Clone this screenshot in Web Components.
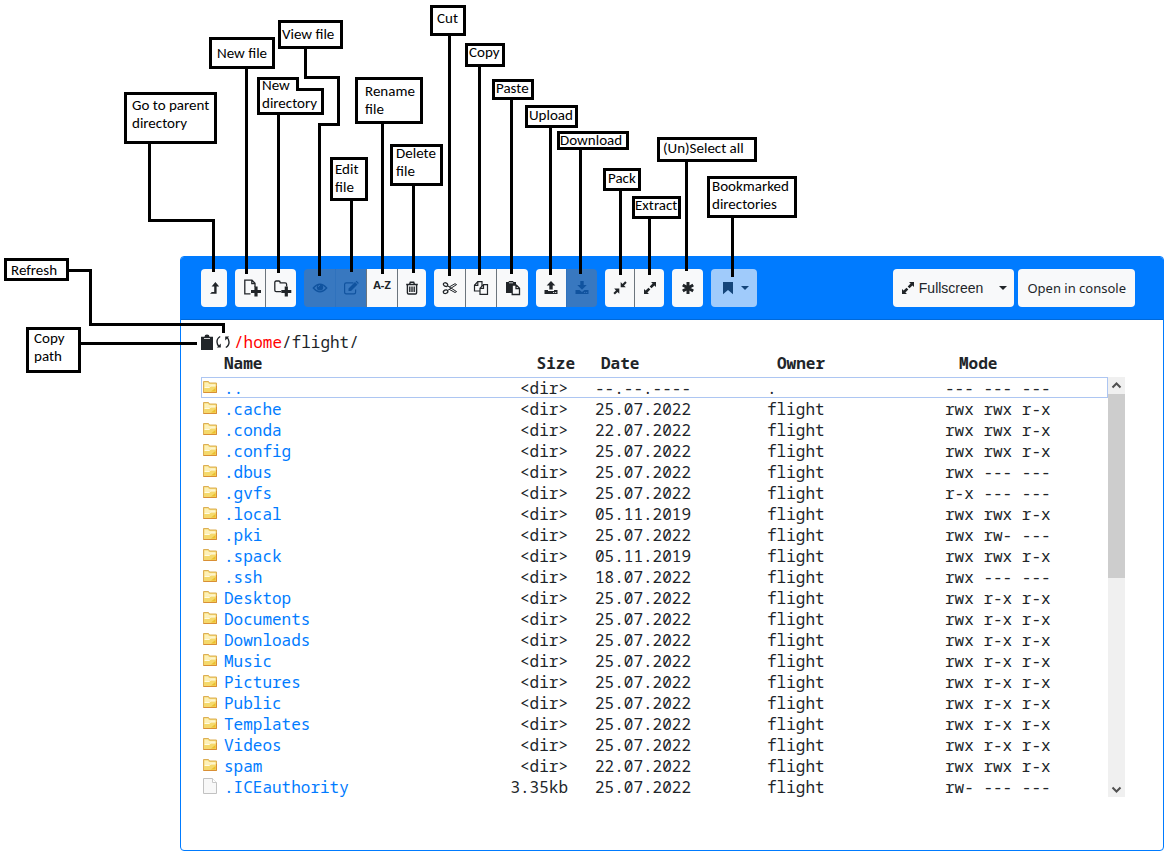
<!DOCTYPE html>
<html lang="en">
<head>
<meta charset="utf-8">
<title>File manager toolbar guide</title>
<style>
  html { background: #fff; }
  body { margin: 0; color: #212529; font-family: "Liberation Sans", Arial, sans-serif; }
</style>
</head>
<body>
<guide-page></guide-page>

<script>
const BOX = 'fill="none" stroke="currentColor"';
const ICONS = {
  up: `<path d="M4 13.8h6.6V6.6h2.6L9.4 2 5.6 6.6h2.6V12H5.8z" fill="currentColor"/>`,
  newfile: `<g transform="translate(3 0)"><path d="M7.5 15.8H1.8V2.2H9l3 3V9M8.8 2.2v3.4H12" ${BOX} stroke-width="1.3"/><path d="M11.4 8.5h3.2V12H18v3.1h-3.4v3.4h-3.2v-3.4H8V12h3.4z" fill="currentColor"/></g>`,
  newdir: `<g transform="translate(2 0)"><path d="M8 13.6H3.2q-1.4 0-1.4-1.4V4.4Q1.8 3 3.2 3h2.6q1.4 0 1.4 1.8h5q1.4 0 1.4 1.4V8.5" ${BOX} stroke-width="1.3"/><path d="M11.7 8.5h3.2V12h3.4v3.1h-3.4v3.4h-3.2v-3.4H8.3V12h3.4z" fill="currentColor"/></g>`,
  eye: `<path d="M1.3 8Q8 .4 14.7 8 8 15.6 1.3 8z" ${BOX} stroke-width="1.3"/><circle cx="8" cy="7.3" r="3.2" fill="currentColor"/><path d="M6.3 7q0-1.7 1.7-1.7" fill="none" stroke="#3878c0" stroke-width=".8"/>`,
  edit: `<path d="M12.6 9.5v2.7q0 1.6-1.6 1.6H3.2q-1.6 0-1.6-1.6V4.4q0-1.6 1.6-1.6h7.2" ${BOX} stroke-width="1.2"/><path d="M5.5 8.5 12 2l2.5 2.5L8 11H5.5zM12.6 1.5l.9-.8 2.3 2.3-.8.9z" fill="currentColor"/>`,
  trash: `<path d="M3.4 4.5h9.2v8.3q0 1.2-1.2 1.2H4.6q-1.2 0-1.2-1.2zM2.2 4.5h11.6M5.6 4.2l.7-2h3.4l.7 2M5.8 6.5v5.6M8 6.5v5.6M10.2 6.5v5.6" ${BOX} stroke-width="1.4"/>`,
  cut: `<g ${BOX} stroke-width="1"><ellipse cx="3.6" cy="4.6" rx="2.3" ry="1.7" transform="rotate(25 3.6 4.6)" stroke-width="1.3"/><ellipse cx="3.6" cy="11.7" rx="2.3" ry="1.7" transform="rotate(-25 3.6 11.7)" stroke-width="1.3"/><path d="M5.5 5.8 14.6 11.6 13 12.5 7 9.2M5.5 10.5 14.6 4.6 13 3.7 7 7.1"/></g>`,
  copy: `<g fill="#f8f9fa" stroke="currentColor" stroke-width="1.2"><path d="M1.5 11V5.3l3.3-3.6H9V11z"/><path d="M4.8 1.7v3.6H1.5" fill="none"/><path d="M7 14.3v-6l3.5-3.6h4v9.6z"/><path d="M10.5 4.7v3.6H7" fill="none"/></g>`,
  paste: `<path d="M1 2h2.7V1h4.6v1H11v3H7v8H1z" fill="currentColor"/><path d="M4 2.8h4" stroke="#f8f9fa" stroke-width=".8"/><path d="M7.2 5.2h4.3l3 3v6.3H7.2zM11 5.2v3.5h3.5" fill="#f8f9fa" stroke="currentColor" stroke-width="1.3"/>`,
  upload: `<path d="M8 1 12.3 5.5H9.7v4H6.3v-4H3.7zM1.5 10H5v1h6v-1h3.500v4h-13z" fill="currentColor"/><path d="M10.2 12.5h1M12.2 12.5h1" stroke="#f8f9fa"/>`,
  download: `<path d="M6.3 1h3.4v4h3L8 9.7 3.3 5h3zM1.500 10h4L8 12l2.500-2h4v4h-13z" fill="currentColor"/><path d="M10.2 12.5h1M12.2 12.5h1" stroke="#3878c0"/>`,
  compress: `<path d="M7.3 8.6v5.2l-1.8-1.7-2.6 2.5-1.5-1.5L4 10.500 2.200 8.600zM8.700 7.300V2.100l1.800 1.800 2.700-2.600 1.500 1.500L12 5.500l1.800 1.800z" fill="currentColor"/>`,
  expand: `<path d="M9 2h5v5l-1.6-1.6-2.9 2.9L7.7 6.5l2.9-2.9zM7 14H2V9l1.6 1.6 2.9-2.9 1.8 1.8-2.9 2.9z" fill="currentColor"/>`,
  asterisk: `<path d="M8 2v12M2.8 5l10.4 6M13.2 5 2.8 11" stroke="currentColor" stroke-width="3"/>`,
  bookmark: `<path d="M3 2h10v12.2L8 10l-5 4.2z" fill="currentColor"/>`,
  caret: `<path d="M0 0h8L4 4z" fill="currentColor"/>`,
  clipboard: `<path d="M2 2.8h3.5Q5.5.5 8 .5t2.5 2.3H14V16H2z" fill="currentColor"/><path d="M5 4.5h6" stroke="#fff" stroke-width=".8"/>`,
  refresh: `<g ${BOX} stroke-width="1.4"><path d="M5.2 2.5Q1.800 4.500 2 8q.1 3 2.200 4.800M10.800 13.500Q14.200 11.500 14 8q-.1-3-2.200-4.800"/></g><path d="M1.800 13.600h4V9.600zM14.200 2.400h-4v4z" fill="currentColor"/>`,
  folder: `<path d="M1.5 13.5v-11h5l1 1.5h7v9.5z" fill="#f5d96c" stroke="#dcae55"/><path d="M2.5 8V3.5h3.6l.8 1.5h6.600v2H8L7 8z" fill="#fdf0b8"/><path d="M2.5 8.5h5l1-1.5h5" fill="none" stroke="#fffbe4"/><path d="M9 12.5h4.500V9z" fill="#ecc02e"/><path d="M1.5 13.5h13V7" fill="none" stroke="#d98f35"/>`,
  file: `<path d="M1.5.5h9l4 4v11h-13z" fill="#f8f8f8" stroke="#c2c2c2"/><path d="M10.5.5v4h4" fill="#fff" stroke="#c8c8c8"/>`
};

function define(name, css, html) {
  customElements.define(name, class extends HTMLElement {
    connectedCallback() {
      if (this.shadowRoot) return;
      const body = typeof html === 'function' ? html(this) : html;
      this.attachShadow({ mode: 'open' }).innerHTML = `<style>${css}</style>${body}`;
    }
  });
}

define('ui-icon', `
  :host { display: inline-flex; flex: none; width: 16px; height: 16px; }
  :host([size="20"]) { width: 20px; height: 20px; }
  :host([name="caret"]) { width: 8px; height: 4px; }
  svg { display: block; width: 100%; height: 100%; overflow: visible; }`,
  el => {
    const name = el.getAttribute('name');
    const s = el.getAttribute('size') || 16;
    return `<svg viewBox="${name === 'caret' ? '0 0 8 4' : `0 0 ${s} ${s}`}" aria-hidden="true">${ICONS[name]}</svg>`;
  });

define('tool-button', `
  :host { display: block; border-left: 1px solid #6c757d; }
  :host(:first-child) { border-left: 0; }
  :host([off]) { border-color: #2f72bd; }
  button { box-sizing: border-box; display: flex; align-items: center; justify-content: center; gap: 3px;
    width: 100%; min-width: 30px; height: 38px; padding: 0; border: 0; background: #f8f9fa; color: #212529;
    font: 14px "Liberation Sans", Arial, sans-serif; white-space: nowrap; }
  :host([narrow]) button { min-width: 26px; }
  :host([slim]) button { min-width: 28px; }
  :host([trim]) button { min-width: 29px; }
  :host([wide]) button { min-width: 31px; }
  button:disabled { background: #3878c0; color: #10539f; }
  :host([text]) button { padding: 0 7px; }
  :host([text="humanist"]) button { font: 13px "Noto Sans", sans-serif; padding: 0 9px; }
  :host([menu]) button { background: #a0cbfb; color: #14457a; width: 46px; gap: 5px; }
  ::slotted(b) { font: 700 11px/16px "Open Sans", sans-serif; padding-bottom: 6px; }`,
  el => `<button type="button" aria-label="${el.getAttribute('label')}" ${el.hasAttribute('off') ? 'disabled' : ''}><slot></slot></button>`);

define('tool-group', `
  :host { display: flex; flex: none; margin-right: 8px; border-radius: 4px; overflow: hidden; }
  :host([tight]) { margin-right: 4px; }`, `<slot></slot>`);

const tool = (label, icon, attrs = '') =>
  `<tool-button label="${label}" ${attrs}><ui-icon name="${icon}"${icon.startsWith('new') ? ' size="20"' : ''}></ui-icon></tool-button>`;

define('tool-bar', `
  :host { display: flex; padding: 12px 20px; background: #007bff; border-bottom: 1px solid #0069d9; border-radius: 3px 3px 0 0; }
  .space { flex: 1; }
  .push { margin-left: 13px; }`, `
  <tool-group>${tool('Go to parent directory', 'up', 'narrow')}</tool-group>
  <tool-group>${tool('New file', 'newfile')}${tool('New directory', 'newdir')}</tool-group>
  <tool-group>${tool('View file', 'eye', 'off wide')}${tool('Edit file', 'edit', 'off')}
    <tool-button label="Rename file"><b>A-Z</b></tool-button>${tool('Delete file', 'trash', 'slim')}</tool-group>
  <tool-group>${tool('Cut', 'cut', 'wide')}${tool('Copy', 'copy')}${tool('Paste', 'paste', 'wide')}</tool-group>
  <tool-group>${tool('Upload', 'upload')}${tool('Download', 'download', 'off')}</tool-group>
  <tool-group>${tool('Pack', 'compress', 'trim')}${tool('Extract', 'expand', 'trim')}</tool-group>
  <tool-group>${tool('Select or unselect all', 'asterisk', 'wide')}</tool-group>
  <tool-group><tool-button label="Bookmarked directories" menu><ui-icon name="bookmark"></ui-icon><ui-icon name="caret"></ui-icon></tool-button></tool-group>
  <span class="space"></span>
  <tool-group tight><tool-button label="Fullscreen" text><ui-icon name="expand"></ui-icon>Fullscreen<ui-icon name="caret" class="push"></ui-icon></tool-button></tool-group>
  <tool-group><tool-button label="Open in console" text="humanist">Open in console</tool-button></tool-group>`);

define('path-line', `
  :host { display: flex; align-items: center; height: 22px; font: 16px/22px var(--mono); white-space: pre; }
  button { display: flex; padding: 0; border: 0; background: none; color: #212529; }
  .copy { width: 12px; justify-content: center; }
  .reload { width: 16px; margin: 0 3px 0 2px; }
  a { color: inherit; text-decoration: none; }
  .home { color: #f00; }`, `
  <button class="copy" type="button" aria-label="Copy path"><ui-icon name="clipboard"></ui-icon></button><button class="reload" type="button" aria-label="Refresh"><ui-icon name="refresh"></ui-icon></button><a class="home" href="#home">/home</a><a href="#flight">/flight/</a>`);

const A = '25.07.2022';
const FULL = 'rwx rwx r-x', OPEN = 'rwx r-x r-x';
const ROWS = [
  ['..', '--.--.----', '--- --- ---', '.'],
  ['.cache', A, FULL], ['.conda', '22.07.2022', FULL], ['.config', A, FULL],
  ['.dbus', A, 'rwx --- ---'], ['.gvfs', A, 'r-x --- ---'],
  ['.local', '05.11.2019', FULL], ['.pki', A, 'rwx rw- ---'], ['.spack', '05.11.2019', FULL],
  ['.ssh', '18.07.2022', 'rwx --- ---'],
  ...['Desktop', 'Documents', 'Downloads', 'Music', 'Pictures', 'Public', 'Templates', 'Videos'].map(n => [n, A, OPEN]),
  ['spam', '22.07.2022', FULL],
  ['.ICEauthority', A, 'rw- --- ---', 'flight', '3.35kb', 'file']
];

define('file-list', `
  :host { display: block; flex: 1; font: 16px/21px var(--mono); }
  table { width: 100%; table-layout: fixed; border-collapse: separate; border-spacing: 0; }
  th, td { box-sizing: border-box; padding: 0; height: 21px; text-align: left; white-space: pre; vertical-align: top; }
  th { height: 24px; }
  td { padding-top: 2px; line-height: 19px; }
  .icon { width: 23px; }
  .size { width: 100px; text-align: right; }
  .date { width: 172px; }
  .owner { width: 178px; }
  .mode { width: 183px; }
  td.size { padding-right: 7px; }
  td.date, td.owner, td.mode { padding-left: 20px; }
  th.date { padding-left: 26px; }
  th.owner { padding-left: 30px; }
  th.mode { padding-left: 34px; }
  td.icon { padding: 2px 0 0 1px; line-height: 0; }
  tr.current { outline: 1px solid #adc6f2; outline-offset: -1px; }
  a { color: #007bff; text-decoration: none; }`,
  () => `<table><thead><tr><th class="icon"></th><th>Name</th><th class="size">Size</th><th class="date">Date</th><th class="owner">Owner</th><th class="mode">Mode</th></tr></thead><tbody>${
    ROWS.map(([n, d, m, o = 'flight', s = '&lt;dir&gt;', i = 'folder'], k) =>
      `<tr${k ? '' : ' class="current"'}><td class="icon"><ui-icon name="${i}"></ui-icon></td><td><a href="#${n}">${n}</a></td><td class="size">${s}</td><td class="date">${d}</td><td class="owner">${o}</td><td class="mode">${m}</td></tr>`).join('')
  }</tbody></table>`);

define('scroll-rail', `
  :host { display: flex; flex-direction: column; width: 17px; margin-top: 24px; background: #f0f0f0; }
  svg { display: block; flex: none; width: 17px; height: 17px; }
  .thumb { flex: 184; background: #cdcdcd; }
  .rest { flex: 202; }`, `
  <svg viewBox="0 0 17 17" aria-hidden="true"><path d="M4.5 10.5l4-4 4 4" fill="none" stroke="#505050" stroke-width="2"/></svg>
  <div class="thumb"></div><div class="rest"></div>
  <svg viewBox="0 0 17 17" aria-hidden="true"><path d="M4.5 7.5l4 4 4-4" fill="none" stroke="#505050" stroke-width="2"/></svg>`);

define('file-panel', `
  :host { display: block; border: 1px solid #007bff; border-radius: 4px; background: #fff;
    --mono: "Noto Sans Mono", "Droid Sans Mono", "DejaVu Sans Mono", monospace; }
  .body { padding: 11px 38px 53px 20px; }
  .list { display: flex; }`, `
  <tool-bar></tool-bar>
  <div class="body"><path-line></path-line><div class="list"><file-list></file-list><scroll-rail></scroll-rail></div></div>`);

/* Each note: outer box x, y, width, height; text x and first line centre; lines of text; leader line. */
const NOTES = [
  [124, 92, 93, 52, 132, 106, ['Go to parent', 'directory'], 'M149.5 143V220.5H213.5V272'],
  [209, 37, 66, 32, 217, 54, ['New file'], 'M246.5 68V274'],
  [278, 20, 65, 29, 282, 35, ['View file'], 'M305.5 48V77.5H338.5V124.5H319.5V276'],
  [355, 77, 68, 47, 365, 92, ['Rename', 'file'], 'M382.5 123V274'],
  [330, 157, 38, 44, 335, 170, ['Edit', 'file'], 'M351.5 200V272'],
  [390, 144, 53, 42, 396, 154, ['Delete', 'file'], 'M413.5 185V273'],
  [430, 5, 36, 31, 437, 19, ['Cut'], 'M449.5 35V276'],
  [465, 43, 40, 24, 469, 53, ['Copy'], 'M479.5 66V275'],
  [492, 79, 42, 21, 496, 89, ['Paste'], 'M511.5 99V274'],
  [525, 105, 53, 23, 529, 116, ['Upload'], 'M550.5 127V275'],
  [557, 131, 72, 19, 560, 141, ['Download'], 'M580.5 149V274'],
  [603, 168, 38, 23, 608, 179, ['Pack'], 'M620.5 190V275'],
  [632, 196, 49, 23, 635, 206, ['Extract'], 'M649.5 218V275'],
  [657, 137, 100, 25, 663, 149, ['(Un)Select all'], 'M686.5 161V271'],
  [707, 176, 90, 42, 712, 187, ['Bookmarked', 'directories'], 'M732.5 217V277'],
  [4, 258, 65, 23, 11, 271, ['Refresh'], 'M68 270.5H90.5V324.5H223.5V333'],
  [26, 327, 55, 46, 34, 339, ['Copy', 'path'], 'M80 343.5H197']
];
const noteText = (x, y, lines) =>
  lines.map((t, i) => `<text x="${x}" y="${y + 4 + i * 18}">${t}</text>`).join('');

define('note-layer', `
  :host { position: absolute; left: 0; top: 0; pointer-events: none; }
  svg { display: block; }
  .line { fill: none; stroke: #000; stroke-width: 3px; }
  text { fill: #000; font: 15px Carlito, Lato, sans-serif; }`,
  () => `<svg width="800" height="376" role="img" aria-label="Toolbar notes">${
    NOTES.map(([x, y, w, h, tx, ty, lines, d]) =>
      `<path class="line" d="${d}"/><rect class="line" x="${x + 1.5}" y="${y + 1.5}" width="${w - 3}" height="${h - 3}"/>${noteText(tx, ty, lines)}`).join('')
  }<path class="line" d="M278.5 114V273M258.5 78.5H297.5V89.5H322.5V113.5H258.5z"/>${noteText(262, 86, ['New', 'directory'])}</svg>`);

define('guide-page', `
  :host { display: block; position: relative; padding: 256px 8px 9px 180px; }`,
  `<file-panel></file-panel><note-layer></note-layer>`);
</script>
</body>
</html>
